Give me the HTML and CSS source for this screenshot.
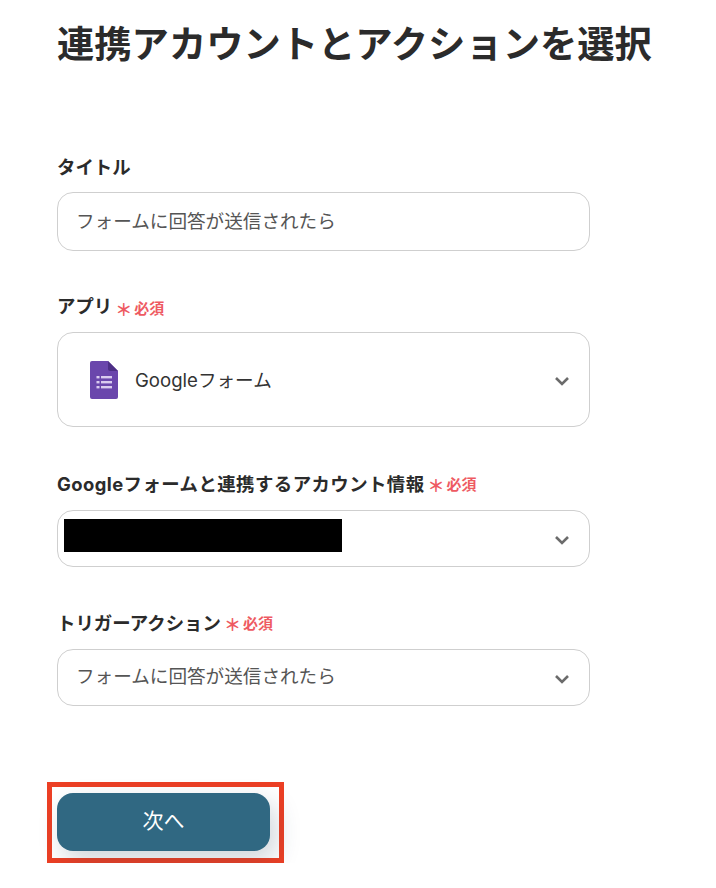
FILE: index.html
```html
<!DOCTYPE html>
<html>
<head>
    <meta charset="utf-8">
    <link rel="stylesheet" href="styles.css">
</head>
<body>
    <h1 class="title">連携アカウントとアクションを選択</h1>

    <div class="field field-first">
        <div class="label">タイトル</div>
        <div class="box box-input"><span>フォームに回答が送信されたら</span></div>
    </div>

    <div class="field field-app">
        <div class="label">アプリ<span class="req"><span class="star">＊</span>必須</span></div>
        <div class="box box-app">
            <svg class="forms-icon" width="28" height="38" viewBox="0 0 28 38">
                <path d="M2 0H18L28 10V36a2 2 0 0 1-2 2H2a2 2 0 0 1-2-2V2a2 2 0 0 1 2-2z" fill="#6a46ac"/>
                <path d="M18 0L28 10H20a2 2 0 0 1-2-2z" fill="#4d2f86"/>
                <g fill="#d9cbef">
                    <rect x="6.5" y="15" width="3" height="2.4"/>
                    <rect x="11" y="15" width="11" height="2.4"/>
                    <rect x="6.5" y="20" width="3" height="2.4"/>
                    <rect x="11" y="20" width="11" height="2.4"/>
                    <rect x="6.5" y="25" width="3" height="2.4"/>
                    <rect x="11" y="25" width="11" height="2.4"/>
                </g>
            </svg>
            <span class="app-name">Googleフォーム</span>
            <svg class="chevron" width="16" height="10" viewBox="0 0 16 10"><path d="M2 2l6 6 6-6" fill="none" stroke="#6b6b6b" stroke-width="2.6"/></svg>
        </div>
    </div>

    <div class="field field-account">
        <div class="label"><span class="label-wide">Googleフォームと連携するアカウント情報</span><span class="req"><span class="star">＊</span>必須</span></div>
        <div class="box box-select">
            <div class="redacted"></div>
            <svg class="chevron" width="16" height="10" viewBox="0 0 16 10"><path d="M2 2l6 6 6-6" fill="none" stroke="#6b6b6b" stroke-width="2.6"/></svg>
        </div>
    </div>

    <div class="field field-trigger">
        <div class="label">トリガーアクション<span class="req"><span class="star">＊</span>必須</span></div>
        <div class="box box-select box-text">
            <span>フォームに回答が送信されたら</span>
            <svg class="chevron" width="16" height="10" viewBox="0 0 16 10"><path d="M2 2l6 6 6-6" fill="none" stroke="#6b6b6b" stroke-width="2.6"/></svg>
        </div>
    </div>

    <div class="next-outline">
        <button class="next-button">次へ</button>
    </div>
</body>
</html>
```

FILE: styles.css
```css
body {
    margin: 0;
    padding: 0 0 0 57px;
    background: #fff;
    font-family: "Inter", "Noto Sans CJK JP", sans-serif;
    color: #2b2b2b;
}

.title {
    margin: 0;
    padding-top: 19px;
    font-size: 37.3px;
    line-height: 52px;
    font-weight: 700;
    color: #2b2b2b;
    white-space: nowrap;
}

.field {
    width: 533px;
}

.field-first { margin-top: 83px; }
.field-app { margin-top: 42px; }
.field-account { margin-top: 44px; }
.field-trigger { margin-top: 43px; }

.label {
    height: 26px;
    font-size: 18.4px;
    line-height: 26px;
    font-weight: 700;
    white-space: nowrap;
}

.label-wide {
    letter-spacing: 0.45px;
}

.req {
    margin-left: 3px;
    font-size: 15px;
    color: #ee5a62;
    vertical-align: -1px;
}

.field-account .req,
.field-trigger .req {
    vertical-align: 1px;
}

.star {
    margin-right: 2px;
    font-size: 17px;
    line-height: 20px;
    font-weight: 700;
    vertical-align: -2px;
}

.box {
    box-sizing: border-box;
    display: flex;
    align-items: center;
    border: 1px solid #cfcfcf;
    border-radius: 16px;
    background: #fff;
    font-size: 18.6px;
    color: #555;
}

.box-input {
    margin-top: 12px;
    height: 59px;
    padding-left: 18px;
}

.box-input span {
    margin-top: -4px;
}

.box-text span {
    margin-top: -6px;
}

.box-app {
    margin-top: 13px;
    height: 95px;
    padding: 0 19px 0 32px;
    color: #333;
}

.box-select {
    margin-top: 13px;
    height: 57px;
    padding: 0 19px 0 6px;
    justify-content: space-between;
}

.box-text {
    padding-left: 18px;
}

.forms-icon {
    flex: none;
}

.app-name {
    margin: -2px 0 0 17px;
    flex: 1;
}

.chevron {
    flex: none;
    margin-top: 2px;
}

.redacted {
    width: 278px;
    height: 33px;
    background: #000;
    margin-top: -6px;
}

.next-outline {
    box-sizing: border-box;
    margin: 76px 0 0 -10px;
    width: 237px;
    height: 81px;
    padding: 6px 0 0 5px;
    border: 5px solid #ec3f24;
}

.next-button {
    display: block;
    width: 213px;
    height: 58px;
    padding: 0 0 6px;
    border: none;
    border-radius: 16px;
    background: #306882;
    color: #fff;
    font-family: inherit;
    font-size: 21px;
    box-shadow: 6px 10px 24px rgba(40, 70, 90, 0.22);
}
```
